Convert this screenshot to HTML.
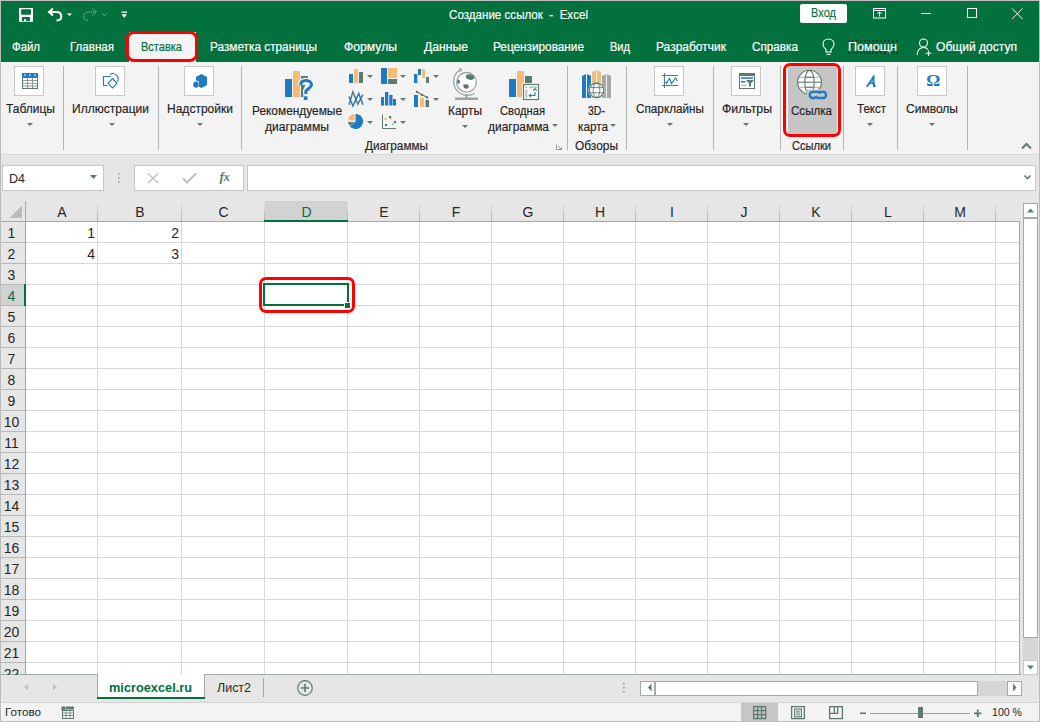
<!DOCTYPE html>
<html><head><meta charset="utf-8">
<style>
*{margin:0;padding:0;box-sizing:border-box}
html,body{width:1040px;height:722px;overflow:hidden;background:#e6e6e6;font-family:"Liberation Sans",sans-serif}
.a{position:absolute}
.t{position:absolute;white-space:nowrap;line-height:1}
.tab{color:#fff;font-size:12.5px;top:41px;-webkit-text-stroke:0.2px currentColor}
.rib{color:#222;font-size:12.5px;-webkit-text-stroke:0.15px currentColor}
.sep{position:absolute;top:66px;width:1px;height:84px;background:#b0b7b3}
.ibox{position:absolute;top:66px;width:30px;height:30px;background:#fff;border:1px solid #c8c8c8}
.dd{position:absolute;width:0;height:0;border-left:3px solid transparent;border-right:3px solid transparent;border-top:3px solid #5e7a6a}
svg{position:absolute;overflow:visible}
.hd{position:absolute;top:201px;height:20px;font-size:14px;color:#262626;text-align:center;line-height:22px}
.rn{position:absolute;left:0;width:23px;font-size:14px;color:#262626;line-height:21px;text-align:center}
</style></head><body>

<div class="a" style="left:0;top:0;width:1040px;height:62px;background:#02713d"></div>
<svg style="left:0;top:0" width="140" height="30">
 <rect x="19" y="8" width="14" height="13.8" fill="#fff"/>
 <path d="M21.1 9.2 H31 V14 L30.2 14.8 H21.9 L21.1 14 Z" fill="#02713d"/>
 <rect x="22" y="17" width="7.9" height="4.1" fill="#02713d"/>
 <rect x="24" y="19" width="2.1" height="2.1" fill="#fff"/>
 <path d="M92.5 8.6 L96.5 12 L92.5 15.4" fill="none" stroke="#6fa585" stroke-width="1.3" stroke-dasharray="1.2 0.8"/>
 <path d="M96 12 H89.5 C86 12 83.6 13.8 83.6 16.2 C83.6 18.8 85.6 20.4 88.5 20.4" fill="none" stroke="#6fa585" stroke-width="1.3" stroke-dasharray="1.2 0.8"/>
 <path d="M53 8.6 L49 12 L53 15.4" fill="none" stroke="#fff" stroke-width="2"/>
 <path d="M49.5 12 H56 C59.5 12 61.3 13.8 61.3 16.2 C61.3 18.8 59.3 20.4 56.5 20.4" fill="none" stroke="#fff" stroke-width="2"/>
 <path d="M67 13.5 H72 L69.5 16 Z" fill="#fff"/>
 <path d="M102.5 13.8 L104.5 15.6 L106.5 13.8" fill="none" stroke="#7fae93" stroke-width="1"/>
 <rect x="121.5" y="11.5" width="5.5" height="1.3" fill="#fff"/>
 <path d="M121.5 14.2 H127 L124.25 18 Z" fill="#fff"/>
</svg>
<div class="t" style="left:449px;top:9px;font-size:12.5px;color:#fff;-webkit-text-stroke:0.15px #fff"><span style="display:inline-block;transform-origin:0 0;transform:scaleX(0.9278)">Создание ссылок&nbsp; -&nbsp; Excel</span></div>
<div class="a" style="left:800px;top:4px;width:47px;height:19px;background:#fff;border-radius:2px"></div>
<div class="t" style="left:811px;top:7px;font-size:12.5px;color:#02713d;-webkit-text-stroke:0.15px #02713d"><span style="display:inline-block;transform-origin:0 0;transform:scaleX(0.8840)">Вход</span></div>
<svg style="left:860px;top:0" width="180" height="30">
 <g fill="none" stroke="#fff" stroke-width="1">
  <rect x="13.5" y="8.5" width="12" height="9.5"/>
  <path d="M13.5 10.5 H25.5"/>
  <path d="M19.5 16.5 V12 M17.3 14 L19.5 11.8 L21.7 14"/>
  <path d="M61 13.5 H71"/>
  <rect x="107.5" y="8.5" width="9" height="9"/>
  <path d="M152 8.5 L162.5 19 M162.5 8.5 L152 19"/>
 </g>
</svg>
<div class="a" style="left:129px;top:32px;width:67px;height:30px;background:#f3f3f3"></div>
<div class="t tab" style="left:12px;width:28px;"><span style="display:inline-block;transform-origin:0 0;transform:scaleX(0.9110)">Файл</span></div>
<div class="t tab" style="left:70px;width:44px;"><span style="display:inline-block;transform-origin:0 0;transform:scaleX(0.9248)">Главная</span></div>
<div class="t tab" style="left:210px;width:107px;"><span style="display:inline-block;transform-origin:0 0;transform:scaleX(0.9435)">Разметка страницы</span></div>
<div class="t tab" style="left:344px;width:53px;"><span style="display:inline-block;transform-origin:0 0;transform:scaleX(0.9742)">Формулы</span></div>
<div class="t tab" style="left:424px;width:44px;"><span style="display:inline-block;transform-origin:0 0;transform:scaleX(0.9741)">Данные</span></div>
<div class="t tab" style="left:493px;width:91px;"><span style="display:inline-block;transform-origin:0 0;transform:scaleX(0.9427)">Рецензирование</span></div>
<div class="t tab" style="left:610px;width:20px;"><span style="display:inline-block;transform-origin:0 0;transform:scaleX(0.8840)">Вид</span></div>
<div class="t tab" style="left:656px;width:70px;"><span style="display:inline-block;transform-origin:0 0;transform:scaleX(0.9601)">Разработчик</span></div>
<div class="t tab" style="left:752px;width:46px;"><span style="display:inline-block;transform-origin:0 0;transform:scaleX(0.9379)">Справка</span></div>
<div class="t tab" style="left:848px;width:49px;"><span style="display:inline-block;transform-origin:0 0;transform:scaleX(1.0067)">Помощн</span></div>
<div class="t tab" style="left:936px;width:81px;"><span style="display:inline-block;transform-origin:0 0;transform:scaleX(0.9645)">Общий доступ</span></div>
<div class="t tab" style="left:141px;color:#02713d"><span style="display:inline-block;transform-origin:0 0;transform:scaleX(0.8823)">Вставка</span></div>
<div class="a" style="left:848px;top:40px;width:50px;height:14px;border-top:2px dotted rgba(0,40,20,0.55);border-bottom:2px dotted rgba(0,40,20,0.55)"></div>
<svg style="left:0;top:30px" width="1040" height="32">
 <g fill="none" stroke="#fff" stroke-width="1.1">
  <path d="M826 49.5 C823.5 47.5 823 46 823 44.2 C823 41 825.5 39 828.5 39 C831.5 39 834 41 834 44.2 C834 46 833.5 47.5 831 49.5 V52 H826 Z" transform="translate(0,-30)"/>
  <path d="M826.5 54.3 H830.5" transform="translate(0,-30)"/>
  <circle cx="923.5" cy="13" r="4"/>
  <path d="M917 25 C917.5 20 920 17.5 923.5 17.5 C925.5 17.5 927 18.2 928 19.5"/>
  <path d="M928.5 20.5 V26 M925.8 23.2 H931.3"/>
 </g>
</svg>
<div class="a" style="left:0;top:62px;width:1040px;height:92px;background:#f3f3f3"></div>
<div class="sep" style="left:63px"></div>
<div class="sep" style="left:158px"></div>
<div class="sep" style="left:241px"></div>
<div class="sep" style="left:567px"></div>
<div class="sep" style="left:626px"></div>
<div class="sep" style="left:713px"></div>
<div class="sep" style="left:780px"></div>
<div class="sep" style="left:843px"></div>
<div class="sep" style="left:897px"></div>
<div class="sep" style="left:967px"></div>
<div class="ibox" style="left:14px"></div>
<div class="ibox" style="left:95px"></div>
<div class="ibox" style="left:184px"></div>
<div class="ibox" style="left:654px"></div>
<div class="ibox" style="left:731px"></div>
<div class="ibox" style="left:855px"></div>
<div class="ibox" style="left:917px"></div>
<div class="a" style="left:788px;top:66px;width:49px;height:68px;background:#c5c5c5"></div>
<div class="t rib" style="left:6px;top:103px;font-size:12.5px;color:#222"><span style="display:inline-block;transform-origin:0 0;transform:scaleX(0.9599)">Таблицы</span></div>
<div class="dd" style="left:27px;top:123px"></div>
<div class="t rib" style="left:72px;top:103px;font-size:12.5px;color:#222"><span style="display:inline-block;transform-origin:0 0;transform:scaleX(0.9631)">Иллюстрации</span></div>
<div class="dd" style="left:109px;top:123px"></div>
<div class="t rib" style="left:167px;top:103px;font-size:12.5px;color:#222"><span style="display:inline-block;transform-origin:0 0;transform:scaleX(0.9622)">Надстройки</span></div>
<div class="dd" style="left:197px;top:123px"></div>
<div class="t rib" style="left:252px;top:105px;font-size:12.5px;color:#222"><span style="display:inline-block;transform-origin:0 0;transform:scaleX(0.9510)">Рекомендуемые</span></div>
<div class="t rib" style="left:265px;top:121px;font-size:12.5px;color:#222"><span style="display:inline-block;transform-origin:0 0;transform:scaleX(0.9715)">диаграммы</span></div>
<div class="t rib" style="left:365px;top:140px;font-size:12.5px;color:#222"><span style="display:inline-block;transform-origin:0 0;transform:scaleX(0.9396)">Диаграммы</span></div>
<div class="t rib" style="left:448px;top:105px;font-size:12.5px;color:#222"><span style="display:inline-block;transform-origin:0 0;transform:scaleX(0.9544)">Карты</span></div>
<div class="dd" style="left:462px;top:125px"></div>
<div class="t rib" style="left:500px;top:105px;font-size:12.5px;color:#222"><span style="display:inline-block;transform-origin:0 0;transform:scaleX(0.8978)">Сводная</span></div>
<div class="t rib" style="left:488px;top:121px;font-size:12.5px;color:#222"><span style="display:inline-block;transform-origin:0 0;transform:scaleX(0.9555)">диаграмма</span></div>
<div class="dd" style="left:552px;top:124px"></div>
<div class="t rib" style="left:588px;top:105px;font-size:12.5px;color:#222"><span style="display:inline-block;transform-origin:0 0;transform:scaleX(0.8434)">3D-</span></div>
<div class="t rib" style="left:578px;top:121px;font-size:12.5px;color:#222"><span style="display:inline-block;transform-origin:0 0;transform:scaleX(0.9398)">карта</span></div>
<div class="dd" style="left:610px;top:124px"></div>
<div class="t rib" style="left:575px;top:140px;font-size:12.5px;color:#222"><span style="display:inline-block;transform-origin:0 0;transform:scaleX(0.9536)">Обзоры</span></div>
<div class="t rib" style="left:636px;top:103px;font-size:12.5px;color:#222"><span style="display:inline-block;transform-origin:0 0;transform:scaleX(0.9387)">Спарклайны</span></div>
<div class="dd" style="left:667px;top:123px"></div>
<div class="t rib" style="left:722px;top:103px;font-size:12.5px;color:#222"><span style="display:inline-block;transform-origin:0 0;transform:scaleX(0.9807)">Фильтры</span></div>
<div class="dd" style="left:743px;top:123px"></div>
<div class="t rib" style="left:791px;top:105px;font-size:12.5px;color:#222"><span style="display:inline-block;transform-origin:0 0;transform:scaleX(0.9262)">Ссылка</span></div>
<div class="t rib" style="left:792px;top:140px;font-size:12.5px;color:#222"><span style="display:inline-block;transform-origin:0 0;transform:scaleX(0.8860)">Ссылки</span></div>
<div class="t rib" style="left:857px;top:103px;font-size:12.5px;color:#222"><span style="display:inline-block;transform-origin:0 0;transform:scaleX(0.9211)">Текст</span></div>
<div class="dd" style="left:867px;top:123px"></div>
<div class="t rib" style="left:906px;top:103px;font-size:12.5px;color:#222"><span style="display:inline-block;transform-origin:0 0;transform:scaleX(0.9618)">Символы</span></div>
<div class="dd" style="left:929px;top:123px"></div>
<div class="dd" style="left:367px;top:75px"></div>
<div class="dd" style="left:367px;top:98px"></div>
<div class="dd" style="left:400px;top:75px"></div>
<div class="dd" style="left:400px;top:98px"></div>
<div class="dd" style="left:433px;top:75px"></div>
<div class="dd" style="left:433px;top:98px"></div>
<div class="dd" style="left:367px;top:121px"></div>
<div class="dd" style="left:400px;top:121px"></div>
<svg style="left:0;top:0" width="1040" height="160">
 <!-- table -->
 <rect x="22" y="73" width="16" height="4.5" fill="#1e7bc2"/>
 <g fill="#fff"><rect x="24" y="74.5" width="2" height="1"/><rect x="29" y="74.5" width="2" height="1"/><rect x="34" y="74.5" width="2" height="1"/></g>
 <rect x="22.5" y="77.5" width="15" height="11" fill="#fff" stroke="#5e7a6a" stroke-width="1"/>
 <g stroke="#8c9a92" stroke-width="1"><path d="M27.5 78 V88 M32.5 78 V88 M23 80.5 H37 M23 83.3 H37 M23 86 H37"/></g>
 <!-- illustrations -->
 <g fill="none" stroke="#1e7bc2" stroke-width="1.1">
  <path d="M110.5 76.5 H103.5 V85.5 H107.5"/>
  <path d="M112.5 78.5 L117 83.3 L112.5 88 L108 83.3 Z"/>
  <path d="M110 74.5 A5.3 5.3 0 0 1 117.5 81.5"/>
 </g>
 <!-- addins -->
 <path d="M201.5 74 L207 77 V85 L201.5 88 L199 86.7 V81.8 L196 80.2 V77 Z" fill="#1e7bc2"/>
 <path d="M196 81.3 L198.6 82.8 V86.5 L196 88 L193.3 86.5 V82.8 Z" fill="#1e7bc2"/>
 <!-- recommended charts -->
 <rect x="285" y="79" width="7" height="18" fill="#1e7bc2"/>
 <rect x="293" y="71" width="7" height="26" fill="#f8bb75"/>
 <path d="M301 76 H308 V79.5 H301 Z M301 85 L305.5 85 L303.3 89.5 V97 H301 Z" fill="#5e7a6a"/>
 <path d="M300.7 85 C300.7 81.8 303 80.5 306 80.5 C309.3 80.5 311.5 82.3 311.5 84.8 C311.5 87.6 307.3 88.8 305.8 91.2 V94" fill="none" stroke="#f3f3f3" stroke-width="5.4"/>
 <path d="M300.7 85 C300.7 81.8 303 80.5 306 80.5 C309.3 80.5 311.5 82.3 311.5 84.8 C311.5 87.6 307.3 88.8 305.8 91.2 V94" fill="none" stroke="#1e7bc2" stroke-width="3"/>
 <rect x="303.8" y="96.3" width="3.6" height="3.7" fill="#1e7bc2"/>
 <!-- small charts row1 -->
 <rect x="349" y="74" width="4" height="9" fill="#1e7bc2"/><rect x="354" y="69" width="4" height="14" fill="#f8bb75"/><rect x="359" y="72" width="4" height="11" fill="#5e7a6a"/>
 <rect x="381" y="68" width="6" height="16" fill="#1e7bc2"/><rect x="388" y="68" width="9" height="10" fill="#f8bb75"/><rect x="388" y="79" width="9" height="5" fill="#5e7a6a"/>
 <rect x="414" y="74" width="3.3" height="9" fill="#1e7bc2"/><rect x="418" y="69" width="3" height="6" fill="#1e7bc2"/><rect x="422" y="69" width="3" height="9" fill="#f8bb75"/><rect x="426" y="77" width="3" height="6" fill="#5e7a6a"/>
 <!-- row2 -->
 <path d="M349 104.8 L352.9 91.7 L357.8 104.2 L363 94.7" fill="none" stroke="#5e7a6a" stroke-width="1.5"/>
 <path d="M349 96.5 L352.9 106 L358.7 93.5 L363 104.8" fill="none" stroke="#1e7bc2" stroke-width="1.5"/>
 <rect x="381" y="97" width="3" height="8.5" fill="#1e7bc2"/><rect x="385" y="92" width="3.3" height="13.5" fill="#1e7bc2"/><rect x="389.3" y="95" width="3.2" height="10.5" fill="#1e7bc2"/><rect x="393" y="99" width="3" height="6.5" fill="#1e7bc2"/>
 <rect x="414" y="95" width="4" height="12" fill="#1e7bc2"/><rect x="420" y="98" width="4" height="9" fill="#f8bb75"/><rect x="425.5" y="100" width="3.5" height="7" fill="#5e7a6a"/>
 <path d="M417 92 L427 97.3" stroke="#5e7a6a" stroke-width="1.2"/><circle cx="417" cy="92" r="1.2" fill="#5e7a6a"/><circle cx="422" cy="95" r="1.2" fill="#5e7a6a"/><circle cx="427" cy="97.5" r="1.2" fill="#5e7a6a"/>
 <!-- row3 pie -->
 <path d="M355.5 121.5 V114 A7.5 7.5 0 1 1 350 126.5 Z" fill="#1e7bc2"/>
 <path d="M354.5 120.5 V114 A7 7 0 0 0 348 120.5 Z" fill="#f8bb75"/>
 <path d="M354.5 122 H348 A7 7 0 0 0 350 126 Z" fill="#5e7a6a"/>
 <path d="M382.5 114.5 V128.5 H396" fill="none" stroke="#5e7a6a" stroke-width="1"/>
 <g><rect x="384.5" y="118" width="2" height="2" fill="#f8bb75"/><rect x="390" y="117.5" width="2" height="2" fill="#f8bb75"/><rect x="392" y="123" width="2" height="2" fill="#f8bb75"/>
 <rect x="389" y="116" width="2" height="2" fill="#1e7bc2"/><rect x="394" y="121" width="2" height="2" fill="#1e7bc2"/><rect x="385" y="124" width="2" height="2" fill="#1e7bc2"/></g>
 <!-- maps globe -->
 <g fill="none" stroke="#9aa5a0" stroke-width="1.3">
  <circle cx="466.5" cy="82.3" r="9.8" fill="#fff"/>
  <path d="M460.5 69.5 A13 13 0 0 0 474.5 93.5"/>
  <path d="M459.5 68 L461.5 70 L459 71.5"/>
 </g>
 <rect x="465.5" y="94" width="2" height="4" fill="#9aa5a0"/>
 <rect x="455" y="97.5" width="23" height="2.5" fill="#9aa5a0"/>
 <g fill="#5e7a6a"><path d="M466 75 C469 73.5 473 74 474.5 77 C474 80 471 80.5 468.5 79.5 C466 79 465.5 77 466 75Z"/><path d="M463 85 C465 84 468 84 469 86 C468.5 89 466 89.5 464 88 Z"/><path d="M457.5 80 C459 79 460 80 460 82 C459.5 84 458 84 457.3 83 Z"/></g>
 <g fill="#1e7bc2"><circle cx="467.5" cy="77" r=".8"/><circle cx="472" cy="78" r=".8"/><circle cx="465" cy="87" r=".8"/><circle cx="458.5" cy="82" r=".8"/></g>
 <!-- pivot chart -->
 <rect x="509" y="79" width="7" height="18" fill="#1e7bc2"/>
 <rect x="517" y="71" width="7" height="26" fill="#f8bb75"/>
 <rect x="525" y="76" width="7" height="7" fill="#5e7a6a"/>
 <rect x="522" y="83" width="18" height="18" fill="#f3f3f3"/>
 <rect x="523.5" y="84.5" width="15" height="15" fill="#fff" stroke="#5e7a6a" stroke-width="1.2"/>
 <g fill="#c0c0c0"><rect x="525.3" y="86.3" width="2" height="2"/><rect x="529" y="86.3" width="8" height="2"/><rect x="525.3" y="90" width="2" height="8"/></g>
 <path d="M535 92 V95.5 H529.5 M533.3 90.5 L535 88.8 L536.7 90.5 M531 93.8 L529.2 95.5 L531 97.2" fill="none" stroke="#1e7bc2" stroke-width="1.1"/>
 <!-- dialog launcher -->
 <path d="M556.5 144.5 V149.5 H561.5 M558 146 L561.5 149.5 M559 149.5 H561.5 V147" fill="none" stroke="#909090" stroke-width="0.9"/>
 <!-- 3D map -->
 <path d="M582 76 L586 74 V98 H582 Z M587 74 L591 76 V98 H587 Z" fill="#1e7bc2"/>
 <path d="M592 72 L596 70 V84 H592 Z M597 70 L601 72 V84 H597 Z" fill="#f8bb75"/>
 <path d="M602 76 L606 74 V98 H602 Z M607 74 L611 76 V98 H607 Z" fill="#a3a9a6"/>
 <circle cx="596.5" cy="90.3" r="8.3" fill="#f3f3f3"/>
 <g fill="#fff" stroke="#5e7a6a" stroke-width="1.3"><circle cx="596.5" cy="90.3" r="7.3"/></g>
 <g fill="none" stroke="#5e7a6a" stroke-width="0.9"><path d="M589.5 87.6 H603.5 M589.5 92.8 H603.5"/><ellipse cx="596.5" cy="90.3" rx="3.3" ry="7.1"/></g>
 <!-- sparklines -->
 <g stroke="#5e7a6a" stroke-width="1.1" fill="none"><path d="M664.5 73 V88 M662 75.5 H678 M662 85.5 H678"/></g>
 <path d="M665.5 81.5 L666.5 83.5 L669.5 78.3 L671.5 83.5 L675.5 78 L677.5 81" fill="none" stroke="#1e7bc2" stroke-width="1.1"/>
 <!-- filters -->
 <rect x="739.5" y="73.5" width="15" height="15" fill="#fff" stroke="#5e7a6a" stroke-width="1"/>
 <rect x="739" y="73" width="16" height="3" fill="#5e7a6a"/>
 <rect x="741" y="77.3" width="12" height="1.5" fill="#1e7bc2"/>
 <rect x="741" y="81" width="4.5" height="1.5" fill="#1e7bc2"/>
 <path d="M746 80 H754 L751 83.5 V86.5 H749 V83.5 Z" fill="#5e7a6a"/>
 <rect x="741" y="85" width="5" height="1" fill="#b0b0b0"/>
 <!-- link globe -->
 <circle cx="809.5" cy="82.2" r="11.9" fill="#fff" stroke="#5e7a6a" stroke-width="1.1"/>
 <g fill="none" stroke="#5e7a6a" stroke-width="1.1"><path d="M798 82.2 H821"/><path d="M799.5 77.3 H819.5 M799.5 87.2 H819.5" stroke="#9fb0a6"/><path d="M805 77.3 H814 M805 87.2 H814"/><ellipse cx="809.5" cy="82.2" rx="4.7" ry="11.8"/></g>
 <path d="M806.5 89.5 H829 V101 H806.5 Z" fill="#c5c5c5"/>
 <g fill="none" stroke="#1e7bc2" stroke-width="2.3">
  <path d="M815.5 98 H812.3 A3.1 3.1 0 0 1 812.3 91.9 H818 A3.1 3.1 0 0 1 820.5 93.8"/>
  <path d="M819.8 91.9 H823.5 A3.1 3.1 0 0 1 823.5 98 H817.8 A3.1 3.1 0 0 1 815.5 96"/>
 </g>
 <!-- text A -->
 <path d="M865.8 86.3 C867.5 84.8 870.5 80 873.2 75.3 L874.8 75.8 C874.2 79.5 874.2 83 875.8 86.8 L873.6 87.4 C872.6 85 872.2 82.8 872.4 80.2 C870.8 82.6 869.4 84.6 867.6 87 Z M868.6 82.3 H873.8 V83.8 H868 Z" fill="#1e7bc2"/>
 <!-- omega -->
 <text x="933.3" y="86.3" text-anchor="middle" font-family="Liberation Serif" font-weight="bold" font-size="17.5" fill="#1e7bc2">Ω</text>
 <!-- collapse caret -->
 <path d="M1022 148.5 L1026.5 144 L1031 148.5" fill="none" stroke="#5e7a6a" stroke-width="2"/>
</svg>
<div class="a" style="left:0;top:154px;width:1040px;height:1px;background:#d9d9d9"></div>
<div class="a" style="left:2px;top:165px;width:102px;height:26px;background:#fff;border:1px solid #c6c6c6"></div>
<div class="t" style="left:9px;top:173px;font-size:12px;color:#262626"><span style="display:inline-block;transform-origin:0 0;transform:scaleX(1.0428)">D4</span></div>
<div class="a" style="left:134px;top:165px;width:110px;height:26px;background:#fff;border:1px solid #c6c6c6"></div>
<div class="a" style="left:247px;top:165px;width:789px;height:26px;background:#fff;border:1px solid #c6c6c6"></div>
<svg style="left:0;top:150px" width="1040" height="50">
 <path d="M90 25 H97 L93.5 29 Z" fill="#5e7a6a"/>
 <g fill="#9aa09c"><rect x="118" y="23" width="1.6" height="1.6"/><rect x="118" y="27" width="1.6" height="1.6"/><rect x="118" y="31" width="1.6" height="1.6"/></g>
 <path d="M148 23.5 L158 33 M158 23.5 L148 33" stroke="#c0c0c0" stroke-width="1.5"/>
 <path d="M183 28.5 L187 32.5 L196 23.5" fill="none" stroke="#c0c0c0" stroke-width="2"/>
 <text x="219.5" y="31" font-family="Liberation Serif" font-style="italic" font-weight="bold" font-size="13.5" fill="#5e7a6a">f<tspan font-size="12" dx="-0.3">x</tspan></text>
 <path d="M1024.5 25.5 L1027.5 28.5 L1030.5 25.5" fill="none" stroke="#5e7a6a" stroke-width="1.6"/>
</svg>
<div class="a" style="left:1px;top:201px;width:1038px;height:21px;background:#e6e6e6"></div>
<div class="a" style="left:265px;top:201px;width:82px;height:20px;background:#d2d2d2"></div>
<div class="a" style="left:26px;top:222px;width:994px;height:452px;background:#fff"></div>
<div class="a" style="left:97px;top:222px;width:1px;height:452px;background:#d9d9d9"></div>
<div class="a" style="left:97px;top:201px;width:1px;height:20px;background:linear-gradient(#e6e6e6,#a9b1ac)"></div>
<div class="a" style="left:181px;top:222px;width:1px;height:452px;background:#d9d9d9"></div>
<div class="a" style="left:181px;top:201px;width:1px;height:20px;background:linear-gradient(#e6e6e6,#a9b1ac)"></div>
<div class="a" style="left:264px;top:222px;width:1px;height:452px;background:#d9d9d9"></div>
<div class="a" style="left:264px;top:201px;width:1px;height:20px;background:linear-gradient(#e6e6e6,#a9b1ac)"></div>
<div class="a" style="left:347px;top:222px;width:1px;height:452px;background:#d9d9d9"></div>
<div class="a" style="left:347px;top:201px;width:1px;height:20px;background:linear-gradient(#e6e6e6,#a9b1ac)"></div>
<div class="a" style="left:419px;top:222px;width:1px;height:452px;background:#d9d9d9"></div>
<div class="a" style="left:419px;top:201px;width:1px;height:20px;background:linear-gradient(#e6e6e6,#a9b1ac)"></div>
<div class="a" style="left:491px;top:222px;width:1px;height:452px;background:#d9d9d9"></div>
<div class="a" style="left:491px;top:201px;width:1px;height:20px;background:linear-gradient(#e6e6e6,#a9b1ac)"></div>
<div class="a" style="left:563px;top:222px;width:1px;height:452px;background:#d9d9d9"></div>
<div class="a" style="left:563px;top:201px;width:1px;height:20px;background:linear-gradient(#e6e6e6,#a9b1ac)"></div>
<div class="a" style="left:635px;top:222px;width:1px;height:452px;background:#d9d9d9"></div>
<div class="a" style="left:635px;top:201px;width:1px;height:20px;background:linear-gradient(#e6e6e6,#a9b1ac)"></div>
<div class="a" style="left:707px;top:222px;width:1px;height:452px;background:#d9d9d9"></div>
<div class="a" style="left:707px;top:201px;width:1px;height:20px;background:linear-gradient(#e6e6e6,#a9b1ac)"></div>
<div class="a" style="left:779px;top:222px;width:1px;height:452px;background:#d9d9d9"></div>
<div class="a" style="left:779px;top:201px;width:1px;height:20px;background:linear-gradient(#e6e6e6,#a9b1ac)"></div>
<div class="a" style="left:851px;top:222px;width:1px;height:452px;background:#d9d9d9"></div>
<div class="a" style="left:851px;top:201px;width:1px;height:20px;background:linear-gradient(#e6e6e6,#a9b1ac)"></div>
<div class="a" style="left:923px;top:222px;width:1px;height:452px;background:#d9d9d9"></div>
<div class="a" style="left:923px;top:201px;width:1px;height:20px;background:linear-gradient(#e6e6e6,#a9b1ac)"></div>
<div class="a" style="left:995px;top:222px;width:1px;height:452px;background:#d9d9d9"></div>
<div class="a" style="left:995px;top:201px;width:1px;height:20px;background:linear-gradient(#e6e6e6,#a9b1ac)"></div>
<div class="a" style="left:26px;top:242px;width:994px;height:1px;background:#d9d9d9"></div>
<div class="a" style="left:1px;top:242px;width:24px;height:1px;background:#b3b9b5"></div>
<div class="a" style="left:26px;top:263px;width:994px;height:1px;background:#d9d9d9"></div>
<div class="a" style="left:1px;top:263px;width:24px;height:1px;background:#b3b9b5"></div>
<div class="a" style="left:26px;top:284px;width:994px;height:1px;background:#d9d9d9"></div>
<div class="a" style="left:1px;top:284px;width:24px;height:1px;background:#b3b9b5"></div>
<div class="a" style="left:26px;top:305px;width:994px;height:1px;background:#d9d9d9"></div>
<div class="a" style="left:1px;top:305px;width:24px;height:1px;background:#b3b9b5"></div>
<div class="a" style="left:26px;top:326px;width:994px;height:1px;background:#d9d9d9"></div>
<div class="a" style="left:1px;top:326px;width:24px;height:1px;background:#b3b9b5"></div>
<div class="a" style="left:26px;top:347px;width:994px;height:1px;background:#d9d9d9"></div>
<div class="a" style="left:1px;top:347px;width:24px;height:1px;background:#b3b9b5"></div>
<div class="a" style="left:26px;top:368px;width:994px;height:1px;background:#d9d9d9"></div>
<div class="a" style="left:1px;top:368px;width:24px;height:1px;background:#b3b9b5"></div>
<div class="a" style="left:26px;top:389px;width:994px;height:1px;background:#d9d9d9"></div>
<div class="a" style="left:1px;top:389px;width:24px;height:1px;background:#b3b9b5"></div>
<div class="a" style="left:26px;top:410px;width:994px;height:1px;background:#d9d9d9"></div>
<div class="a" style="left:1px;top:410px;width:24px;height:1px;background:#b3b9b5"></div>
<div class="a" style="left:26px;top:431px;width:994px;height:1px;background:#d9d9d9"></div>
<div class="a" style="left:1px;top:431px;width:24px;height:1px;background:#b3b9b5"></div>
<div class="a" style="left:26px;top:452px;width:994px;height:1px;background:#d9d9d9"></div>
<div class="a" style="left:1px;top:452px;width:24px;height:1px;background:#b3b9b5"></div>
<div class="a" style="left:26px;top:473px;width:994px;height:1px;background:#d9d9d9"></div>
<div class="a" style="left:1px;top:473px;width:24px;height:1px;background:#b3b9b5"></div>
<div class="a" style="left:26px;top:494px;width:994px;height:1px;background:#d9d9d9"></div>
<div class="a" style="left:1px;top:494px;width:24px;height:1px;background:#b3b9b5"></div>
<div class="a" style="left:26px;top:515px;width:994px;height:1px;background:#d9d9d9"></div>
<div class="a" style="left:1px;top:515px;width:24px;height:1px;background:#b3b9b5"></div>
<div class="a" style="left:26px;top:536px;width:994px;height:1px;background:#d9d9d9"></div>
<div class="a" style="left:1px;top:536px;width:24px;height:1px;background:#b3b9b5"></div>
<div class="a" style="left:26px;top:557px;width:994px;height:1px;background:#d9d9d9"></div>
<div class="a" style="left:1px;top:557px;width:24px;height:1px;background:#b3b9b5"></div>
<div class="a" style="left:26px;top:578px;width:994px;height:1px;background:#d9d9d9"></div>
<div class="a" style="left:1px;top:578px;width:24px;height:1px;background:#b3b9b5"></div>
<div class="a" style="left:26px;top:599px;width:994px;height:1px;background:#d9d9d9"></div>
<div class="a" style="left:1px;top:599px;width:24px;height:1px;background:#b3b9b5"></div>
<div class="a" style="left:26px;top:620px;width:994px;height:1px;background:#d9d9d9"></div>
<div class="a" style="left:1px;top:620px;width:24px;height:1px;background:#b3b9b5"></div>
<div class="a" style="left:26px;top:641px;width:994px;height:1px;background:#d9d9d9"></div>
<div class="a" style="left:1px;top:641px;width:24px;height:1px;background:#b3b9b5"></div>
<div class="a" style="left:26px;top:662px;width:994px;height:1px;background:#d9d9d9"></div>
<div class="a" style="left:1px;top:662px;width:24px;height:1px;background:#b3b9b5"></div>
<div class="a" style="left:1px;top:285px;width:23px;height:20px;background:#d2d2d2"></div>
<div class="a" style="left:1px;top:221px;width:1019px;height:1px;background:#a3aaa6"></div>
<div class="a" style="left:25px;top:201px;width:1px;height:473px;background:#a3aaa6"></div>
<div class="a" style="left:264px;top:220px;width:84px;height:2px;background:#02713d"></div>
<div class="a" style="left:24px;top:284px;width:2px;height:22px;background:#02713d"></div>
<div class="a" style="left:1019px;top:221px;width:1px;height:454px;background:#a3aaa6"></div>
<div class="a" style="left:1px;top:674px;width:1020px;height:1px;background:#a3aaa6"></div>
<svg style="left:0;top:195px" width="30" height="30"><path d="M22 10.5 V23 H9.5 Z" fill="#b8bcba"/></svg>
<div class="hd" style="left:26px;width:72px;color:#262626">A</div>
<div class="hd" style="left:98px;width:84px;color:#262626">B</div>
<div class="hd" style="left:182px;width:83px;color:#262626">C</div>
<div class="hd" style="left:265px;width:83px;color:#02713d">D</div>
<div class="hd" style="left:348px;width:72px;color:#262626">E</div>
<div class="hd" style="left:420px;width:72px;color:#262626">F</div>
<div class="hd" style="left:492px;width:72px;color:#262626">G</div>
<div class="hd" style="left:564px;width:72px;color:#262626">H</div>
<div class="hd" style="left:636px;width:72px;color:#262626">I</div>
<div class="hd" style="left:708px;width:72px;color:#262626">J</div>
<div class="hd" style="left:780px;width:72px;color:#262626">K</div>
<div class="hd" style="left:852px;width:72px;color:#262626">L</div>
<div class="hd" style="left:924px;width:72px;color:#262626">M</div>
<div class="rn" style="top:223px;height:21px;color:#262626">1</div>
<div class="rn" style="top:244px;height:21px;color:#262626">2</div>
<div class="rn" style="top:265px;height:21px;color:#262626">3</div>
<div class="rn" style="top:286px;height:21px;color:#02713d">4</div>
<div class="rn" style="top:307px;height:21px;color:#262626">5</div>
<div class="rn" style="top:328px;height:21px;color:#262626">6</div>
<div class="rn" style="top:349px;height:21px;color:#262626">7</div>
<div class="rn" style="top:370px;height:21px;color:#262626">8</div>
<div class="rn" style="top:391px;height:21px;color:#262626">9</div>
<div class="rn" style="top:412px;height:21px;color:#262626">10</div>
<div class="rn" style="top:433px;height:21px;color:#262626">11</div>
<div class="rn" style="top:454px;height:21px;color:#262626">12</div>
<div class="rn" style="top:475px;height:21px;color:#262626">13</div>
<div class="rn" style="top:496px;height:21px;color:#262626">14</div>
<div class="rn" style="top:517px;height:21px;color:#262626">15</div>
<div class="rn" style="top:538px;height:21px;color:#262626">16</div>
<div class="rn" style="top:559px;height:21px;color:#262626">17</div>
<div class="rn" style="top:580px;height:21px;color:#262626">18</div>
<div class="rn" style="top:601px;height:21px;color:#262626">19</div>
<div class="rn" style="top:622px;height:21px;color:#262626">20</div>
<div class="rn" style="top:643px;height:21px;color:#262626">21</div>
<div class="rn" style="top:664px;height:21px;color:#262626">22</div>
<div class="t" style="left:57px;width:38px;text-align:right;top:226px;font-size:14px;color:#262626">1</div>
<div class="t" style="left:141px;width:38px;text-align:right;top:226px;font-size:14px;color:#262626">2</div>
<div class="t" style="left:57px;width:38px;text-align:right;top:247px;font-size:14px;color:#262626">4</div>
<div class="t" style="left:141px;width:38px;text-align:right;top:247px;font-size:14px;color:#262626">3</div>
<div class="a" style="left:263px;top:283px;width:86px;height:23px;border:2px solid #02713d"></div>
<div class="a" style="left:344px;top:302px;width:5px;height:5px;background:#02713d;border:1px solid #fff;box-sizing:content-box"></div>
<div class="a" style="left:259px;top:277px;width:96px;height:36px;border:3px solid #f00;border-radius:7px"></div>
<div class="a" style="left:1021px;top:201px;width:18px;height:474px;background:#e6e6e6"></div>
<div class="a" style="left:1023px;top:203px;width:15px;height:15px;background:#fff;border:1px solid #a3aaa6"></div>
<div class="a" style="left:1023px;top:218px;width:15px;height:420px;background:#fff;border:1px solid #a3aaa6"></div>
<div class="a" style="left:1023px;top:638px;width:15px;height:22px;background:#d6d6d6"></div>
<div class="a" style="left:1023px;top:660px;width:15px;height:15px;background:#fff;border:1px solid #c6c6c6"></div>
<svg style="left:1020px;top:200px" width="20" height="480"><path d="M7 12.5 L10.5 8.5 L14 12.5 Z" fill="#5e7a6a"/><path d="M7 465.5 L10.5 469.5 L14 465.5 Z" fill="#5e7a6a"/></svg>
<div class="a" style="left:1px;top:675px;width:1038px;height:27px;background:#e6e6e6"></div>
<div class="a" style="left:97px;top:674px;width:108px;height:25px;background:#fff;border-left:1px solid #a3aaa6;border-right:1px solid #a3aaa6"></div>
<div class="a" style="left:97px;top:697px;width:108px;height:2px;background:#02713d"></div>
<div class="t" style="left:109px;top:682px;font-size:12.5px;font-weight:bold;color:#02713d"><span style="display:inline-block;transform-origin:0 0;transform:scaleX(1.0209)">microexcel.ru</span></div>
<div class="t" style="left:217px;top:682px;font-size:12.5px;color:#262626"><span style="display:inline-block;transform-origin:0 0;transform:scaleX(0.9963)">Лист2</span></div>
<div class="a" style="left:263px;top:678px;width:1px;height:19px;background:#a3aaa6"></div>
<svg style="left:0;top:670px" width="1040" height="32">
 <path d="M28 13.5 L24 17 L28 20.5 Z" fill="#c3c3c3"/>
 <path d="M53 13.5 L57 17 L53 20.5 Z" fill="#c3c3c3"/>
 <circle cx="305" cy="18" r="7.3" fill="none" stroke="#5e7a6a" stroke-width="1.2"/>
 <path d="M305 14 V22 M301 18 H309" stroke="#5e7a6a" stroke-width="1.6"/>
 <g fill="#9aa09c"><rect x="623" y="13" width="1.6" height="1.6"/><rect x="623" y="17" width="1.6" height="1.6"/><rect x="623" y="21" width="1.6" height="1.6"/></g>
 <path d="M651.5 13.5 L648 17.5 L651.5 21.5 Z" fill="#5e7a6a"/>
 <path d="M1013 13.5 L1016.5 17.5 L1013 21.5 Z" fill="#5e7a6a"/>
</svg>
<div class="a" style="left:640px;top:681px;width:15px;height:15px;background:#fff;border:1px solid #a3aaa6"></div>
<div class="a" style="left:655px;top:681px;width:323px;height:15px;background:#fff;border:1px solid #a3aaa6"></div>
<div class="a" style="left:978px;top:681px;width:29px;height:15px;background:#d6d6d6"></div>
<div class="a" style="left:1007px;top:681px;width:15px;height:15px;background:#fff;border:1px solid #a3aaa6"></div>
<svg style="left:0;top:670px" width="1040" height="32"><path d="M651.5 13.5 L648 17.5 L651.5 21.5 Z" fill="#5e7a6a"/><path d="M1013 13.5 L1016.5 17.5 L1013 21.5 Z" fill="#5e7a6a"/></svg>
<div class="a" style="left:0;top:702px;width:1040px;height:20px;background:#f3f3f3;border-top:1px solid #d4d4d4"></div>
<div class="t" style="left:5px;top:707px;font-size:11px;color:#262626"><span style="display:inline-block;transform-origin:0 0;transform:scaleX(1.0598)">Готово</span></div>
<div class="a" style="left:741px;top:703px;width:37px;height:18px;background:#c6c6c6"></div>
<svg style="left:0;top:700px" width="1040" height="22">
 <circle cx="63.5" cy="8.5" r="2.3" fill="#5e7a6a"/>
 <rect x="66" y="6.5" width="8" height="3" fill="#5e7a6a"/>
 <rect x="62.5" y="10.5" width="11" height="8" fill="#fff" stroke="#5e7a6a" stroke-width="1"/>
 <g stroke="#5e7a6a" stroke-width="0.8"><path d="M66 11 V18 M70 11 V18 M63 13 H73 M63 15.5 H73"/></g>
 <g fill="none" stroke="#5e7a6a" stroke-width="1.1">
  <rect x="753.6" y="6.6" width="12" height="12" stroke-width="1.3"/>
  <path d="M757.6 6.6 V18.6 M761.6 6.6 V18.6 M753.6 10.6 H765.6 M753.6 14.6 H765.6" stroke-width="1.3"/>
  <rect x="791.6" y="6.6" width="12.8" height="12" stroke-width="1.3"/>
  <rect x="794.6" y="9" width="6.8" height="7.8" stroke-width="1.1"/>
  <path d="M796 11.2 H800 M796 13 H800 M796 14.8 H800" stroke-width="0.9"/>
  <rect x="829.6" y="6.6" width="12.8" height="12" stroke-width="1.3"/>
  <path d="M834.3 6.6 V13.3 M837.6 6.6 V13.3 H829.6" stroke-width="1.3"/>
 </g>
 <rect x="860" y="12.5" width="6" height="1.6" fill="#5e7a6a"/>
 <rect x="870" y="13" width="100" height="1" fill="#9aa09c"/>
 <rect x="918" y="7" width="5" height="11" fill="#5e7a6a"/>
 <path d="M974 13.3 H981.5 M977.75 9.5 V17" stroke="#5e7a6a" stroke-width="1.8"/>
</svg>
<div class="t" style="left:992px;top:707px;font-size:11.5px;color:#262626"><span style="display:inline-block;transform-origin:0 0;transform:scaleX(0.9200)">100 %</span></div>
<div class="a" style="left:126px;top:31px;width:72px;height:31px;border:3px solid #f00;border-radius:8px"></div>
<div class="a" style="left:783px;top:63px;width:58px;height:74px;border:3px solid #f00;border-radius:7px"></div>
<div class="a" style="left:0;top:0;width:1040px;height:722px;border:1px solid #bcbcbc;border-top-color:#c4c0c0"></div>

</body></html>
